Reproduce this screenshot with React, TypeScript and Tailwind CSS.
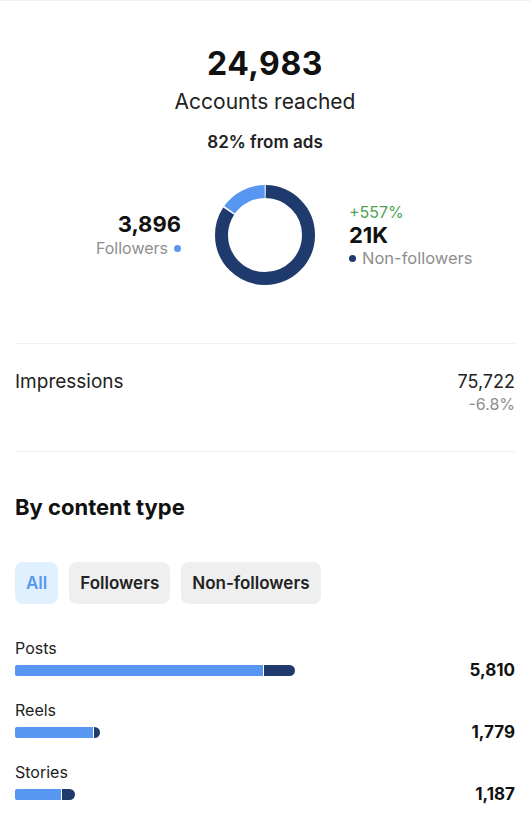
import React from "react";

const LIGHT = "#5897f1";
const DARK = "#1f3a6c";

function Donut() {
  const r = 43.5;
  const c = 2 * Math.PI * r;
  const blue = c * (3896 / 24983);
  const gap = 1.5;
  const dark = c - blue;
  return (
    <svg width="100" height="100" viewBox="0 0 100 100" className="shrink-0">
      <g transform="rotate(-90 50 50)">
        <circle cx="50" cy="50" r={r} fill="none" stroke={DARK} strokeWidth="13"
          strokeDasharray={`${dark - gap} ${c}`} strokeDashoffset={-gap / 2} />
        <circle cx="50" cy="50" r={r} fill="none" stroke={LIGHT} strokeWidth="13"
          strokeDasharray={`${blue - gap} ${c}`} strokeDashoffset={-(dark + gap / 2)} />
      </g>
    </svg>
  );
}

const rows = [
  { label: "Posts", value: "5,810", light: 248, dark: 31 },
  { label: "Reels", value: "1,779", light: 78, dark: 6 },
  { label: "Stories", value: "1,187", light: 46, dark: 13 },
];

export default function App() {
  return (
    <div className="w-[530px] min-h-[814px] bg-white border-t border-[#f0f0f0] text-[#111] font-['Inter','Liberation_Sans',sans-serif]">
      {/* header */}
      <div className="flex flex-col items-center pt-[44px]">
        <div className="text-[32px] leading-[38px] font-bold tracking-[0.5px]">24,983</div>
        <div className="text-[21px] leading-[26px] mt-[6px] text-[#222]">Accounts reached</div>
        <div className="text-[17px] leading-[20px] mt-[17px] font-semibold text-[#222]">82% from ads</div>
      </div>

      {/* donut row */}
      <div className="flex items-center mt-[33px] gap-[34px]">
        <div className="flex-1 flex flex-col items-end">
          <div className="text-[22px] leading-[26px] font-bold">3,896</div>
          <div className="flex items-center gap-[6px] text-[16px] leading-[22px] text-[#8e8e8e]">
            Followers
            <span className="w-[7px] h-[7px] rounded-full bg-[#5897f1]" />
          </div>
        </div>
        <Donut />
        <div className="flex-1 flex flex-col items-start">
          <div className="text-[16px] leading-[22px] text-[#4fa254]">+557%</div>
          <div className="text-[22px] leading-[24px] font-bold">21K</div>
          <div className="flex items-center gap-[6px] text-[16.5px] leading-[22px] text-[#8e8e8e]">
            <span className="w-[7px] h-[7px] rounded-full bg-[#1f3a6c]" />
            Non-followers
          </div>
        </div>
      </div>

      <div className="mx-[15px] mt-[58px] h-px bg-[#f0f0f0]" />

      {/* impressions */}
      <div className="flex justify-between px-[15px] pt-[26px]">
        <div className="text-[19px] leading-[24px] text-[#222]">Impressions</div>
        <div className="flex flex-col items-end">
          <div className="text-[18px] leading-[24px] text-[#222]">75,722</div>
          <div className="text-[16px] leading-[20px] text-[#8e8e8e]">-6.8%</div>
        </div>
      </div>

      <div className="mx-[15px] mt-[37px] h-px bg-[#f0f0f0]" />

      {/* by content type */}
      <div className="px-[15px]">
        <div className="mt-[41px] text-[22px] leading-[28px] font-bold">By content type</div>

        <div className="flex gap-[11px] mt-[41px]">
          <button className="h-[42px] pt-[2px] px-[11px] rounded-[8px] bg-[#e1f0ff] text-[#5897f1] text-[17px] font-semibold">All</button>
          <button className="h-[42px] pt-[2px] px-[11px] rounded-[8px] bg-[#efefef] text-[#222] text-[17px] font-semibold">Followers</button>
          <button className="h-[42px] pt-[2px] px-[11px] rounded-[8px] bg-[#efefef] text-[#222] text-[17px] font-semibold">Non-followers</button>
        </div>

        <div className="flex flex-col gap-[20px] mt-[34px]">
          {rows.map((row) => (
            <div key={row.label}>
              <div className="text-[16px] leading-[20px] text-[#222]">{row.label}</div>
              <div className="flex items-center justify-between h-[20px] mt-[2px]">
                <div className="flex h-[11px] gap-px">
                  <div className="h-full rounded-l-[2px] bg-[#5897f1]" style={{ width: row.light }} />
                  <div className="h-full rounded-r-full bg-[#1f3a6c]" style={{ width: row.dark }} />
                </div>
                <div className="text-[17px] leading-[20px] font-bold">{row.value}</div>
              </div>
            </div>
          ))}
        </div>
      </div>
    </div>
  );
}
